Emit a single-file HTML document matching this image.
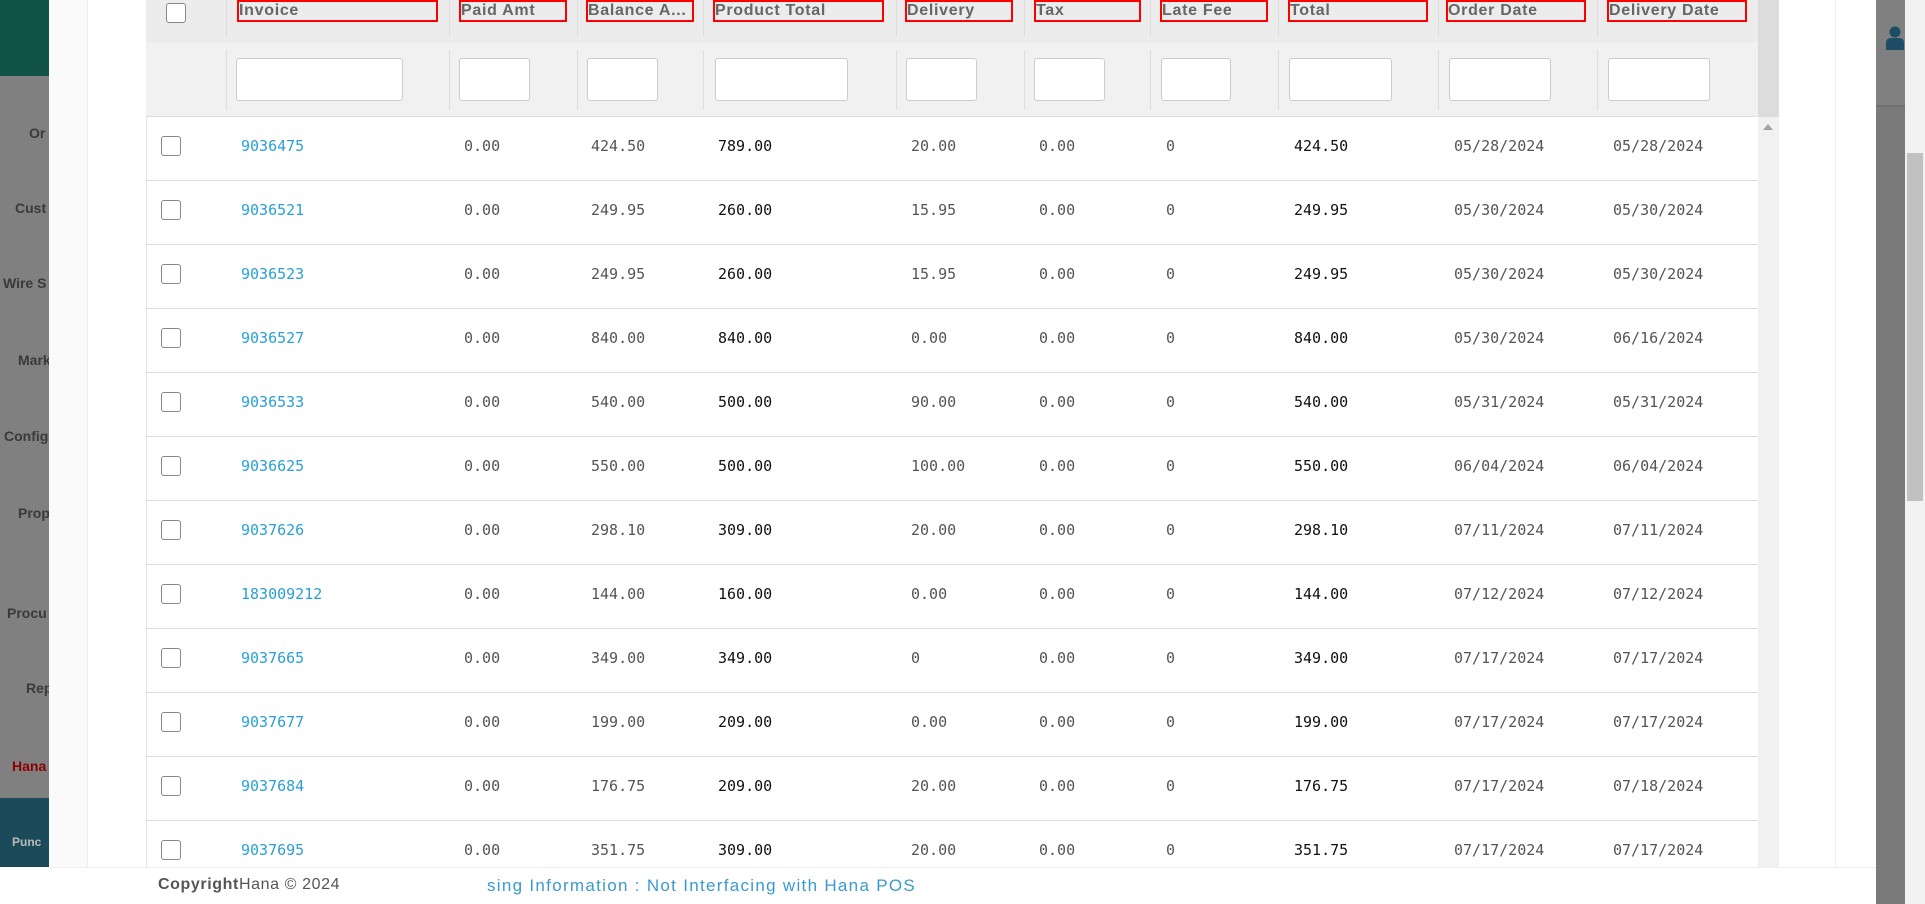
<!DOCTYPE html>
<html><head><meta charset="utf-8"><style>
*{box-sizing:border-box;margin:0;padding:0}
body{width:1925px;height:904px;overflow:hidden;background:#fff;font-family:"Liberation Sans",sans-serif;position:relative}
.a{position:absolute}
.sb{left:0;top:0;width:49px;height:904px;background:#808080}
.sbt{position:absolute;font-weight:bold;font-size:14px;color:#3a3a3a;white-space:nowrap}
.hdr{left:146px;top:0;width:1612px;height:43px;background:#ececec}
.flt{left:146px;top:43px;width:1612px;height:74px;background:#f1f1f1}
.rb{position:absolute;top:0;height:22px;border:2px solid #f00;font-weight:bold;font-size:16px;letter-spacing:0.7px;color:#666;line-height:18px;white-space:nowrap;overflow:hidden}
.in{position:absolute;top:58px;height:43px;background:#fff;border:1px solid #ccc;border-radius:3px}
.vl{position:absolute;width:1px;background:#ddd}
.row{position:absolute;left:146px;width:1612px;height:64px;border-bottom:1px solid #ddd}
.c{position:absolute;top:20px;font-family:"DejaVu Sans Mono",monospace;font-size:15px;color:#555;white-space:nowrap}
.cb{position:absolute;left:15px;top:19px;width:20px;height:20px;border:1px solid #888;border-radius:3px;background:#fff}
</style></head><body>
<div class="a sb"></div>
<div class="a" style="left:0;top:0;width:49px;height:76px;background:#0f5446"></div>
<div class="a" style="left:0;top:798px;width:49px;height:69px;background:#1b4a5a"></div>
<div class="sbt" style="left:29px;top:125px">Or</div>
<div class="sbt" style="left:15px;top:200px">Cust</div>
<div class="sbt" style="left:3px;top:275px">Wire S</div>
<div class="sbt" style="left:18px;top:352px">Mark</div>
<div class="sbt" style="left:4px;top:428px">Config</div>
<div class="sbt" style="left:18px;top:505px">Prop</div>
<div class="sbt" style="left:7px;top:605px">Procu</div>
<div class="sbt" style="left:26px;top:680px">Rep</div>
<div class="sbt" style="left:12px;top:758px;color:#8b0000">Hana</div>
<div class="sbt" style="left:12px;top:835px;color:#bbb;font-size:12px">Punc</div>
<div class="a" style="left:49px;top:0;width:39px;height:867px;background:#fafafa;border-right:1px solid #eee"></div>
<div class="a" style="left:1835px;top:0;width:41px;height:867px;background:#fff;border-left:1px solid #eee"></div>
<div class="a" style="left:1876px;top:0;width:29px;height:904px;background:#7a7a7a"></div>
<div class="a" style="left:1876px;top:0;width:29px;height:107px;background:#808080;border-bottom:2px solid #707070"></div>
<svg class="a" style="left:1886px;top:26px" width="18" height="24" viewBox="0 0 18 24"><circle cx="9" cy="6" r="5.5" fill="#1d4d66"/><path d="M0 24 V17 Q0 12 5 12 H13 Q18 12 18 17 V24Z" fill="#1d4d66"/></svg>
<div class="a" style="left:1905px;top:0;width:20px;height:904px;background:#f1f1f1"></div>
<div class="a" style="left:1907px;top:153px;width:16px;height:348px;background:#c1c1c1"></div>
<div class="a" style="left:1758px;top:0;width:21px;height:867px;background:#f1f1f1"></div>
<div class="a" style="left:1758px;top:0;width:21px;height:117px;background:#dcdcdc"></div>
<div class="a" style="left:1763px;top:124px;width:0;height:0;border-left:5px solid transparent;border-right:5px solid transparent;border-bottom:6px solid #a3a3a3"></div>

<div class="a hdr"></div>
<div class="a flt"></div>
<div class="a" style="left:146px;top:116px;width:1612px;height:1px;background:#ddd"></div>
<div class="a" style="left:146px;top:117px;width:1px;height:750px;background:#e5e5e5"></div>
<div class="a" style="left:166px;top:3px;width:20px;height:20px;border:1px solid #888;border-radius:3px;background:#fff"></div>
<div id="h"></div>
<div id="rows"></div>

<div class="a" style="left:0;top:867px;width:1925px;height:37px;background:#fff;border-top:1px solid #eee"></div>
<div class="a" style="left:0;top:867px;width:49px;height:37px;background:#fff"></div>
<div class="a" style="left:158px;top:876px;font-size:16px;letter-spacing:0.6px;color:#555;white-space:nowrap"><b>Copyright</b>Hana © 2024</div>
<div class="a" style="left:487px;top:876px;font-size:17px;letter-spacing:1.3px;color:#3a9ad0;white-space:nowrap">sing Information : Not Interfacing with Hana POS</div>
<div class="a" style="left:1876px;top:867px;width:29px;height:37px;background:#7a7a7a"></div>
<div class="a" style="left:1905px;top:867px;width:20px;height:37px;background:#f1f1f1"></div>
<script>
var lines=[226,449,577,703,896,1024,1150,1278,1438,1597];
var boxes=[[237,201,"Invoice"],[459,108,"Paid Amt"],[586,108,"Balance A..."],[713,171,"Product Total"],[905,108,"Delivery"],[1034,107,"Tax"],[1160,108,"Late Fee"],[1288,140,"Total"],[1446,140,"Order Date"],[1607,140,"Delivery Date"]];
var ins=[[236,167],[459,71],[587,71],[715,133],[906,71],[1034,71],[1161,70],[1289,103],[1449,102],[1608,102]];
var h="";
lines.forEach(function(x){h+='<div class="vl" style="left:'+x+'px;top:0;height:36px"></div><div class="vl" style="left:'+x+'px;top:50px;height:60px"></div>';});
boxes.forEach(function(b){h+='<div class="rb" style="left:'+b[0]+'px;width:'+b[1]+'px">'+b[2]+'</div>';});
ins.forEach(function(b){h+='<div class="in" style="left:'+b[0]+'px;width:'+b[1]+'px"></div>';});
document.getElementById('h').innerHTML=h;
var data=[
["9036475","0.00","424.50","789.00","20.00","0.00","0","424.50","05/28/2024","05/28/2024"],
["9036521","0.00","249.95","260.00","15.95","0.00","0","249.95","05/30/2024","05/30/2024"],
["9036523","0.00","249.95","260.00","15.95","0.00","0","249.95","05/30/2024","05/30/2024"],
["9036527","0.00","840.00","840.00","0.00","0.00","0","840.00","05/30/2024","06/16/2024"],
["9036533","0.00","540.00","500.00","90.00","0.00","0","540.00","05/31/2024","05/31/2024"],
["9036625","0.00","550.00","500.00","100.00","0.00","0","550.00","06/04/2024","06/04/2024"],
["9037626","0.00","298.10","309.00","20.00","0.00","0","298.10","07/11/2024","07/11/2024"],
["183009212","0.00","144.00","160.00","0.00","0.00","0","144.00","07/12/2024","07/12/2024"],
["9037665","0.00","349.00","349.00","0","0.00","0","349.00","07/17/2024","07/17/2024"],
["9037677","0.00","199.00","209.00","0.00","0.00","0","199.00","07/17/2024","07/17/2024"],
["9037684","0.00","176.75","209.00","20.00","0.00","0","176.75","07/17/2024","07/18/2024"],
["9037695","0.00","351.75","309.00","20.00","0.00","0","351.75","07/17/2024","07/17/2024"]];
var xs=[241,464,591,718,911,1039,1166,1294,1454,1613];
var r="";
data.forEach(function(d,i){
 r+='<div class="row" style="top:'+(117+i*64)+'px"><div class="cb"></div>';
 d.forEach(function(v,j){
  var col=j==0?'#2a9fd6':(j==3||j==7)?'#111':'#555';
  r+='<div class="c" style="left:'+(xs[j]-146)+'px;color:'+col+'">'+v+'</div>';
 });
 r+='</div>';
});
document.getElementById('rows').innerHTML=r;
</script>
</body></html>
